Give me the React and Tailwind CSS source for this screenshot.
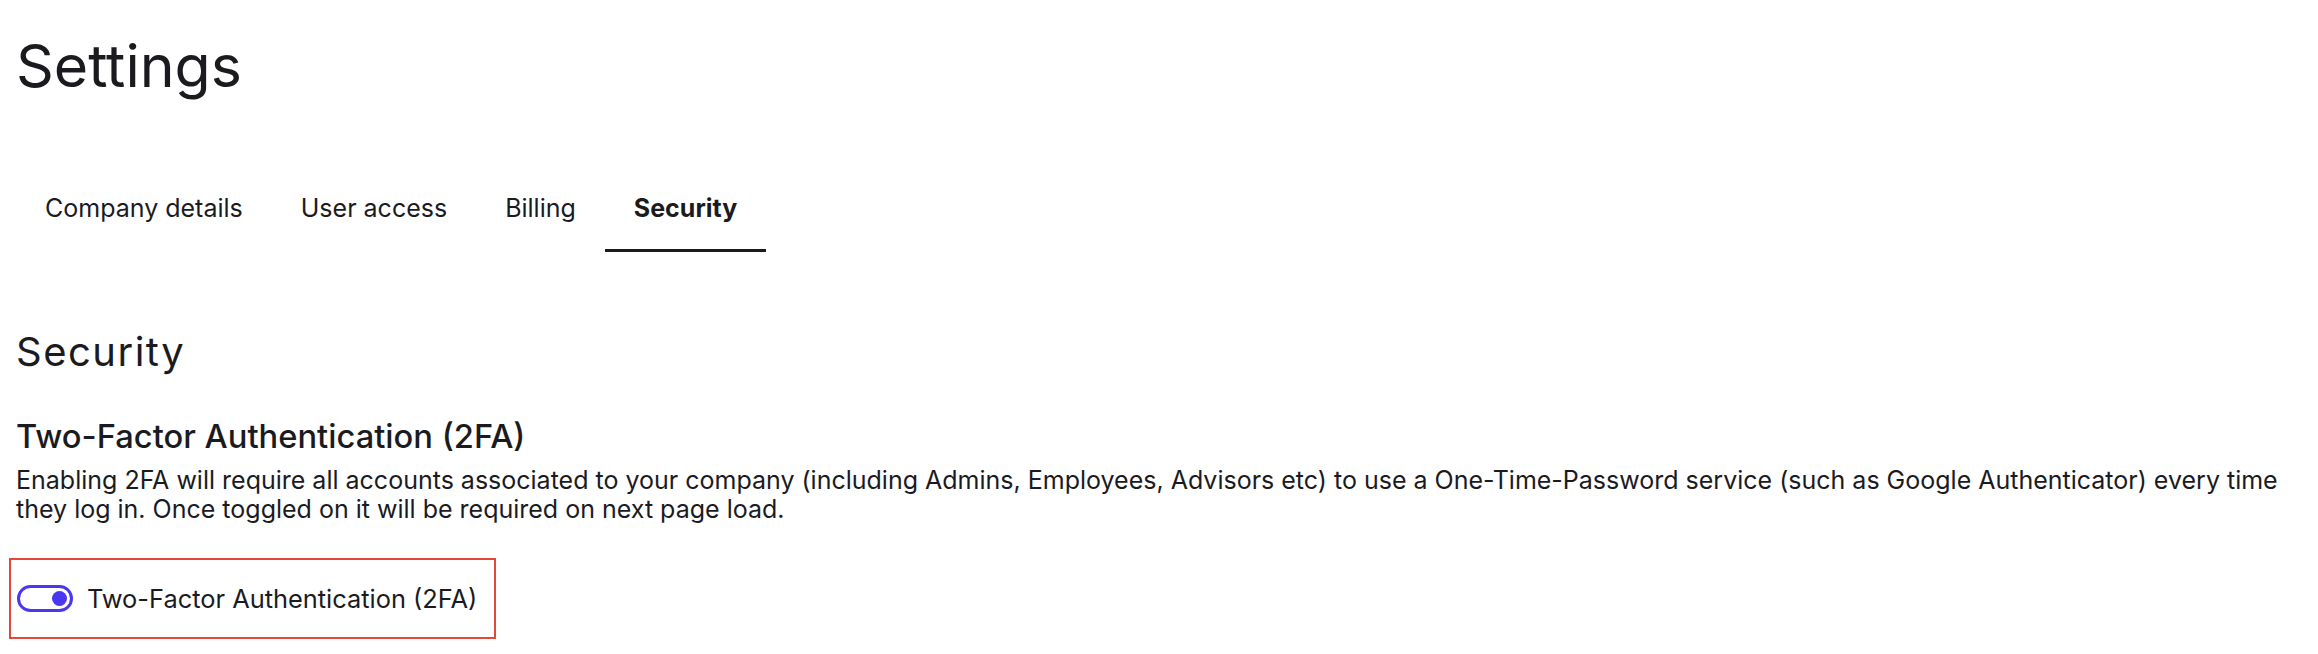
import React, { useState } from "react";

const tabs = ["Company details", "User access", "Billing", "Security"];

const Toggle = ({ on, onChange }) => {
  return (
    <button
      type="button"
      role="switch"
      aria-checked={on}
      onClick={() => onChange(!on)}
      className={`flex h-[27px] w-[56px] shrink-0 items-center rounded-full border-[3px] border-[#4a37f2] bg-white px-[3px] ${
        on ? "justify-end" : "justify-start"
      }`}
    >
      <span className="block h-[15px] w-[15px] rounded-full bg-[#4a37f2]" />
    </button>
  );
};

const App = () => {
  const [active, setActive] = useState("Security");
  const [twoFactor, setTwoFactor] = useState(true);

  return (
    <div className="min-h-screen bg-white px-4 text-[#1b1b1f] font-['Inter',sans-serif]">
      <h1 className="pt-[36px] text-[59px] leading-none font-normal">Settings</h1>

      <nav className="mt-[81px] flex">
        {tabs.map((tab) => (
          <button
            key={tab}
            type="button"
            onClick={() => setActive(tab)}
            className={`px-[29px] pt-[20px] pb-[28px] text-[25px] leading-none border-b-[3px] ${
              active === tab ? "border-[#1b1b1f] font-bold" : "border-transparent font-normal"
            }`}
          >
            {tab}
          </button>
        ))}
      </nav>

      <h2 className="mt-[80px] text-[40px] leading-none font-normal tracking-[1.5px]">Security</h2>

      <h3 className="mt-[48px] text-[32.7px] leading-none font-medium">
        Two-Factor Authentication (2FA)
      </h3>
      <p className="mt-[13px] text-[25px] leading-[29px]">
        Enabling 2FA will require all accounts associated to your company (including Admins,
        Employees, Advisors etc) to use a One-Time-Password service (such as Google Authenticator)
        every time they log in. Once toggled on it will be required on next page load.
      </p>

      <div className="mt-[34px] -ml-[7px] flex h-[81px] w-[487px] items-center gap-[14px] border-2 border-[#e5483b] pl-[6px]">
        <Toggle on={twoFactor} onChange={setTwoFactor} />
        <span className="text-[25.4px] leading-none">Two-Factor Authentication (2FA)</span>
      </div>
    </div>
  );
};

export default App;
